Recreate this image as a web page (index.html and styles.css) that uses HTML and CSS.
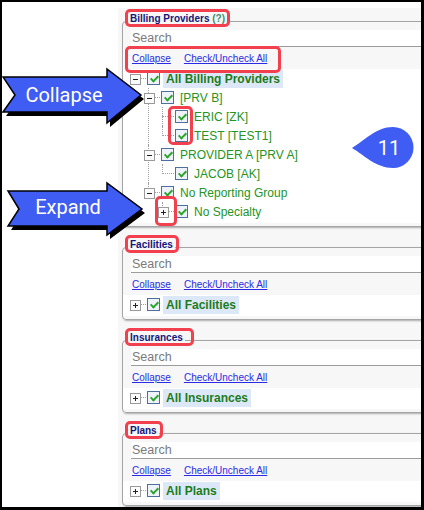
FILE: index.html
```html
<!DOCTYPE html>
<html lang="en">
<head>
  <meta charset="UTF-8" />
  <title>Report Filters</title>
  <link rel="stylesheet" href="styles.css">
</head>
<body>
  <div class="frame">
    <div class="panel">

      <!-- Billing Providers -->
      <fieldset class="picker">
        <legend class="marked mark-tight">Billing Providers <span class="help">(?)</span></legend>
        <input class="search" type="text" placeholder="Search" />
        <div class="links marked"><a href="#">Collapse</a><a href="#">Check/Uncheck All</a></div>
        <ul class="tree">
          <li>
            <div class="row"><span class="tog minus"></span><span class="cb"></span><span class="label sel">All Billing Providers</span></div>
            <ul>
              <li>
                <div class="row"><span class="tog minus"></span><span class="cb"></span><span class="label">[PRV B]</span></div>
                <ul>
                  <li>
                    <div class="row"><span class="tog leaf"></span><span class="cb"></span><span class="label">ERIC [ZK]</span></div>
                    <span class="ring ring-cbs"></span>
                  </li>
                  <li>
                    <div class="row"><span class="tog leaf"></span><span class="cb"></span><span class="label">TEST [TEST1]</span></div>
                  </li>
                </ul>
              </li>
              <li>
                <div class="row"><span class="tog minus"></span><span class="cb"></span><span class="label">PROVIDER A [PRV A]</span></div>
                <ul>
                  <li>
                    <div class="row"><span class="tog leaf"></span><span class="cb"></span><span class="label">JACOB [AK]</span></div>
                  </li>
                </ul>
              </li>
              <li>
                <div class="row"><span class="tog minus"></span><span class="cb"></span><span class="label">No Reporting Group</span></div>
                <ul>
                  <li>
                    <div class="row"><span class="tog plus"><span class="ring ring-tog"></span></span><span class="cb"></span><span class="label">No Specialty</span></div>
                  </li>
                </ul>
              </li>
            </ul>
          </li>
        </ul>
      </fieldset>

      <!-- Facilities -->
      <fieldset class="picker">
        <legend class="marked">Facilities</legend>
        <input class="search" type="text" placeholder="Search" />
        <div class="links"><a href="#">Collapse</a><a href="#">Check/Uncheck All</a></div>
        <ul class="tree">
          <li><div class="row"><span class="tog plus"></span><span class="cb"></span><span class="label sel">All Facilities</span></div></li>
        </ul>
      </fieldset>

      <!-- Insurances -->
      <fieldset class="picker">
        <legend class="marked mark-wide">Insurances</legend>
        <input class="search" type="text" placeholder="Search" />
        <div class="links"><a href="#">Collapse</a><a href="#">Check/Uncheck All</a></div>
        <ul class="tree">
          <li><div class="row"><span class="tog plus"></span><span class="cb"></span><span class="label sel">All Insurances</span></div></li>
        </ul>
      </fieldset>

      <!-- Plans -->
      <fieldset class="picker">
        <legend class="marked">Plans</legend>
        <input class="search" type="text" placeholder="Search" />
        <div class="links"><a href="#">Collapse</a><a href="#">Check/Uncheck All</a></div>
        <ul class="tree">
          <li><div class="row"><span class="tog plus"></span><span class="cb"></span><span class="label sel">All Plans</span></div></li>
        </ul>
      </fieldset>
    </div>

    <!-- callouts -->
    <svg class="callout callout-collapse" width="146" height="66" viewBox="0 0 146 66">
      <polygon points="4,17 108,17 108,9 142,35 108,63 108,52 4,52 16,35" fill="#000"/>
      <polygon points="1,13 105,13 105,5 139,31 105,59 105,48 1,48 13,31" fill="#3f5cf3" stroke="#000" stroke-width="1.5"/>
      <text x="62" y="38" text-anchor="middle">Collapse</text>
    </svg>

    <svg class="callout callout-expand" width="146" height="62" viewBox="0 0 146 62">
      <polygon points="9,15 108,15 108,7 143,33 108,59 108,50 9,50 20,33" fill="#000"/>
      <polygon points="6,11 105,11 105,3 140,29 105,55 105,46 6,46 17,29" fill="#3f5cf3" stroke="#000" stroke-width="1.5"/>
      <text x="66" y="34" text-anchor="middle">Expand</text>
    </svg>

    <svg class="callout callout-count" width="66" height="46" viewBox="0 0 66 46">
      <path d="M2 23 C14 16 26 2 43 2 A20.5 20.5 0 1 1 43 43 C26 43 14 30 2 23 Z" fill="#3f5cf3"/>
      <text x="39" y="30" text-anchor="middle">11</text>
    </svg>
  </div>
</body>
</html>
```

FILE: styles.css
```css
* { box-sizing: border-box; }

body {
  margin: 0;
  background: #fff;
  font-family: "Liberation Sans", Arial, sans-serif;
}

.frame {
  position: relative;
  width: 424px;
  height: 510px;
  border: solid #000;
  border-width: 2px 3px 3px 2px;
  overflow: hidden;
  background: #fff;
}

.panel {
  width: 340px;
  height: 520px;
  margin: 6px 0 0 116px;
  padding: 5px 0 0 4px;
  background: #f7f7f7;
}

/* filter group */
.picker {
  width: 330px;
  min-width: 0;
  margin: 0 0 12px;
  padding: 1px 0 3px 8px;
  border: 1px solid #a5a5a5;
  border-radius: 4px;
  background: #f7f7f7;
  box-shadow: 1px 1px 2px rgba(0,0,0,0.3);
}
.picker legend {
  position: relative;
  margin-left: -3px;
  padding: 0 2px 4px;
  font-size: 10px;
  line-height: 12px;
  font-weight: bold;
  color: #15157a;
}
.picker legend .help { color: #3d8f6d; }

.search {
  display: block;
  width: 100%;
  height: 17px;
  margin: 0;
  padding: 0 1px;
  border: 0;
  border-bottom: 1px solid #9c9c9c;
  background: #fff;
  font: 12.5px "Liberation Sans", Arial, sans-serif;
  color: #333;
  outline: none;
}
.search::placeholder { color: #7a7a7a; }

.links {
  position: relative;
  display: flex;
  align-items: center;
  gap: 13px;
  height: 22px;
  padding-left: 1px;
  font-size: 10px;
}
.links a { color: #2b2be6; text-decoration: underline; }

/* tree */
.tree {
  margin: 0 0 0 -8px;
  padding: 0 0 2px 7px;
  list-style: none;
  background: #fff;
}
.tree ul {
  margin: 0;
  padding-left: 14px;
  list-style: none;
}
.tree li { position: relative; }
.tree ul > li::before {
  content: '';
  position: absolute;
  left: 4px; top: 0; bottom: 0;
  border-left: 1px dotted #a0a0a0;
}
.tree ul > li:last-child::before { bottom: auto; height: 10px; }

.row {
  display: flex;
  align-items: center;
  height: 19px;
}

.tog {
  position: relative;
  flex: none;
  width: 17px;
  height: 19px;
}
.tog::after {
  content: '';
  position: absolute;
  left: 9px; right: 1px; top: 9px;
  border-top: 1px dotted #a0a0a0;
}
.tog.leaf::after { left: 4px; }
.tog.plus::before,
.tog.minus::before {
  content: '';
  position: absolute;
  z-index: 1;
  left: 0; top: 5px;
  width: 9px; height: 9px;
  border: 1px solid #9a9a9a;
  background: linear-gradient(#222, #222) center / 5px 1px no-repeat, #fbfbfb;
}
.tog.plus::before {
  background:
    linear-gradient(#222, #222) center / 5px 1px no-repeat,
    linear-gradient(#222, #222) center / 1px 5px no-repeat,
    #fbfbfb;
}

.cb {
  position: relative;
  flex: none;
  width: 13px;
  height: 13px;
  border: 1px solid #4e6f9c;
  background: #eef3fa;
}
.cb::after {
  content: '';
  position: absolute;
  left: 3.5px; top: 1px;
  width: 3px; height: 6px;
  border: solid #2aa52a;
  border-width: 0 2px 2px 0;
  transform: rotate(45deg);
}

.label {
  margin-left: 3px;
  padding: 0 3px;
  font-size: 12px;
  line-height: 18px;
  color: #259425;
  white-space: nowrap;
}
.label.sel {
  font-weight: bold;
  color: #1c7c1c;
  background: #dce8f8;
}

/* red highlight rings */
.marked::after,
.ring {
  position: absolute;
  z-index: 2;
  border: 3px solid #f2404e;
  border-radius: 5px;
  pointer-events: none;
}
legend.marked::after {
  content: '';
  top: -4px; bottom: 2px;
  left: -3px; right: -4px;
}
legend.mark-tight::after { right: -3px; }
legend.mark-wide::after { right: -9px; }
.links.marked::after {
  content: '';
  left: -6px; top: -1px;
  width: 150px; height: 21px;
}
.ring-cbs { left: 10px; top: -1px; width: 25px; height: 39px; }
.ring-tog { left: -3px; top: -6px; width: 22px; height: 30px; }

/* blue callouts */
.callout {
  position: absolute;
  overflow: visible;
}
.callout text {
  font-family: Roboto, "Liberation Sans", sans-serif;
  font-size: 20px;
  fill: #fff;
}
.callout-collapse { left: 0; top: 62px; }
.callout-expand { left: 0; top: 178px; }
.callout-count { left: 348px; top: 123px; }
```
